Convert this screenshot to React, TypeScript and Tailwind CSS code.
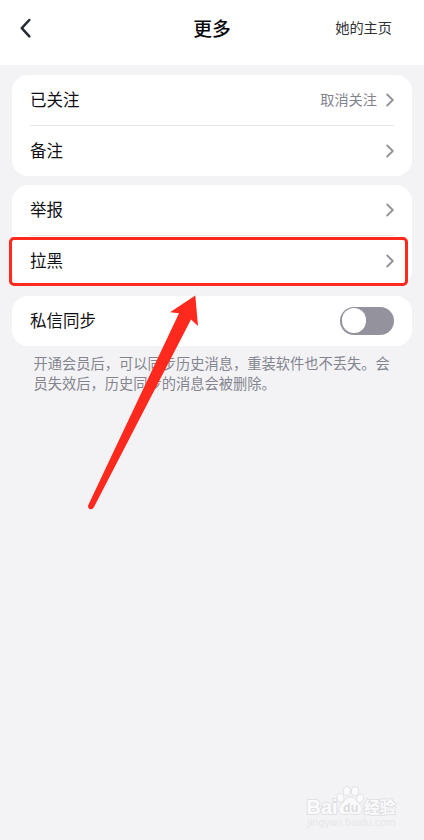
import type { ReactNode } from "react";

function Chevron() {
  return (
    <svg width="8" height="14" viewBox="0 0 8 14" fill="none" stroke="#929298" strokeWidth="1.8" strokeLinecap="round" strokeLinejoin="round">
      <path d="M1.2 1.5 L6.8 7 L1.2 12.5" />
    </svg>
  );
}

function Row({ label, children, divided = false }: { label: string; children?: ReactNode; divided?: boolean }) {
  return (
    <div className={divided ? "flex h-[51px] items-center justify-between border-b-[1.5px] border-[#e6e6e9]" : "flex h-[50px] items-center justify-between"}>
      <span className="pb-[2px] text-[16.5px] leading-6 text-[#101014]">{label}</span>
      <div className="flex items-center gap-[9px]">{children}</div>
    </div>
  );
}

function Card({ children }: { children: ReactNode }) {
  return <section className="rounded-2xl bg-white px-[18px]">{children}</section>;
}

function Arrow() {
  return (
    <svg className="pointer-events-none absolute top-[290px] left-[80px]" width="130" height="230" viewBox="80 290 130 230">
      <path
        d="M195.3 295.5 L170 312.2 L179 313.3 L88.2 505.3 Q87.6 508.6 90.3 509.2 Q92.8 509.5 94 507 L191 319.6 L198 326 Z"
        fill="#ff2a1d"
      />
    </svg>
  );
}

function Watermark() {
  return (
    <svg className="absolute top-[780px] left-[300px]" width="110" height="52" viewBox="300 780 110 52">
      <g fill="#fafafb" stroke="#e1e1e4" strokeWidth="1">
        <ellipse cx="340.5" cy="797.8" rx="3.4" ry="4.5" transform="rotate(-15 340.5 797.8)" />
        <ellipse cx="346.8" cy="791" rx="3.6" ry="4.6" />
        <ellipse cx="355" cy="791.2" rx="3.6" ry="4.6" transform="rotate(8 355 791.2)" />
        <ellipse cx="360" cy="798.5" rx="3.4" ry="4.5" transform="rotate(18 360 798.5)" />
        <path d="M350.5 797 C346 797 344.5 801.5 341 804.5 C336.5 809 339 815 345 814.5 C349 814 352 814 356 814.5 C362 815 364.5 809 360 804.5 C356.5 801.5 355 797 350.5 797 Z" />
      </g>
      <g fill="#fafafb" stroke="#e0e0e3" strokeWidth="2" strokeLinejoin="round" style={{ paintOrder: "stroke" }}>
        <text x="306.5" y="814" fontSize="20" fontWeight="bold" fontFamily="Liberation Sans, Arial, sans-serif" textLength="31" lengthAdjust="spacingAndGlyphs">Bai</text>
        <text x="364" y="813" fontSize="15.8" fontWeight="bold" fontFamily="Noto Sans CJK SC, sans-serif">经验</text>
      </g>
      <text x="307.5" y="826" fontSize="10.5" fill="#e6e6e9" fontFamily="Liberation Sans, Arial, sans-serif" textLength="88" lengthAdjust="spacingAndGlyphs">jingyan.baidu.com</text>
      <text x="343" y="812" fontSize="12.5" fontWeight="bold" fill="#dcdce0" fontFamily="Liberation Sans, Arial, sans-serif">du</text>
    </svg>
  );
}

export default function App() {
  return (
    <div className="relative h-[840px] w-[424px] overflow-hidden bg-[#f3f3f6] font-['Noto_Sans_CJK_SC',sans-serif]">
      <header className="grid h-[65px] grid-cols-3 items-center bg-white pr-8 pb-[9px] pl-5">
        <svg width="12" height="20" viewBox="0 0 12 20" fill="none" stroke="#252a35" strokeWidth="2.5" strokeLinecap="round" strokeLinejoin="round">
          <path d="M9.3 2 L1.8 10.2 L9.3 18.3" />
        </svg>
        <h1 className="relative left-[6px] text-center text-[18.8px] leading-7 font-medium text-[#08080a]">更多</h1>
        <span className="pb-[2px] text-right text-[14.2px] leading-5 text-[#303035]">她的主页</span>
      </header>
      <main className="flex flex-col gap-[9.5px] px-3 pt-[9.5px]">
        <Card>
          <Row label="已关注" divided>
            <span className="pb-[2px] text-[14.2px] leading-5 text-[#83838e]">取消关注</span>
            <Chevron />
          </Row>
          <Row label="备注"><Chevron /></Row>
        </Card>
        <Card>
          <Row label="举报" divided><Chevron /></Row>
          <Row label="拉黑"><Chevron /></Row>
        </Card>
        <Card>
          <Row label="私信同步">
            <div className="flex h-[28px] w-[54px] items-center rounded-full bg-[#93929d] pl-[1.5px]">
              <div className="size-[24.5px] rounded-full bg-white" />
            </div>
          </Row>
        </Card>
      </main>
      <p className="mt-[7px] ml-[33.5px] text-[14.25px] leading-[20px] whitespace-nowrap text-[#85858f]">
        开通会员后，可以同步历史消息，重装软件也不丢失。会
        <br />
        员失效后，历史同步的消息会被删除。
      </p>
      <div className="absolute top-[237px] left-[8.5px] h-[49px] w-[399.5px] rounded-[5px] border-3 border-[#ff2a1d]" />
      <Arrow />
      <Watermark />
    </div>
  );
}
